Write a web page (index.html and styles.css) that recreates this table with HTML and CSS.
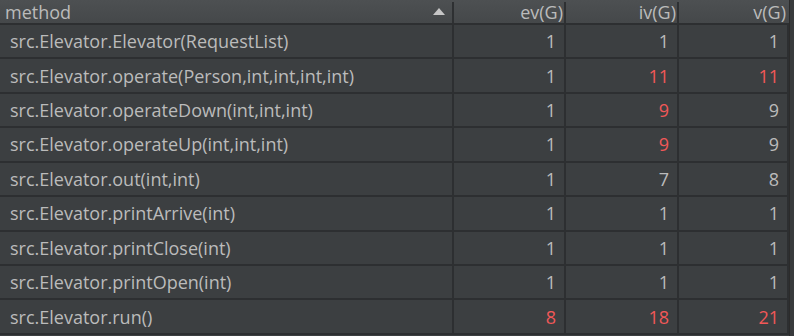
FILE: index.html
```html
<!DOCTYPE html>
<html>
<head>
<meta charset="utf-8">
<link rel="stylesheet" href="styles.css">
</head>
<body>
<div class="wrap">
  <div class="table">
    <div class="row head">
      <div class="cell name">method<span class="sort"></span></div>
      <div class="cell num">ev(G)</div>
      <div class="cell num">iv(G)</div>
      <div class="cell num">v(G)</div>
    </div>
    <div class="row"><div class="cell name">src.Elevator.Elevator(RequestList)</div><div class="cell num">1</div><div class="cell num">1</div><div class="cell num">1</div></div>
    <div class="row"><div class="cell name">src.Elevator.operate(Person,int,int,int,int)</div><div class="cell num">1</div><div class="cell num red">11</div><div class="cell num red">11</div></div>
    <div class="row"><div class="cell name">src.Elevator.operateDown(int,int,int)</div><div class="cell num">1</div><div class="cell num red">9</div><div class="cell num">9</div></div>
    <div class="row"><div class="cell name">src.Elevator.operateUp(int,int,int)</div><div class="cell num">1</div><div class="cell num red">9</div><div class="cell num">9</div></div>
    <div class="row"><div class="cell name">src.Elevator.out(int,int)</div><div class="cell num">1</div><div class="cell num">7</div><div class="cell num">8</div></div>
    <div class="row"><div class="cell name">src.Elevator.printArrive(int)</div><div class="cell num">1</div><div class="cell num">1</div><div class="cell num">1</div></div>
    <div class="row"><div class="cell name">src.Elevator.printClose(int)</div><div class="cell num">1</div><div class="cell num">1</div><div class="cell num">1</div></div>
    <div class="row"><div class="cell name">src.Elevator.printOpen(int)</div><div class="cell num">1</div><div class="cell num">1</div><div class="cell num">1</div></div>
    <div class="row"><div class="cell name">src.Elevator.run()</div><div class="cell num red">8</div><div class="cell num red">18</div><div class="cell num red">21</div></div>
  </div>
  <div class="edge"></div>
</div>
</body>
</html>
```
FILE: styles.css
```css
html, body {
  margin: 0;
  padding: 0;
  background: #3c3f41;
  overflow: hidden;
}
.wrap {
  display: flex;
  width: 794px;
  height: 336px;
  overflow: hidden;
  font-family: "Open Sans", "Noto Sans", sans-serif;
  font-size: 18px;
  color: #bbbbbb;
}
.table {
  width: 789px;
  display: flex;
  flex-direction: column;
}
.edge {
  width: 5px;
  background: #383a3c;
  border-left: 1px solid #2b2b2b;
}
.row {
  display: grid;
  grid-template-columns: 454px 112px 113px 110px;
  height: 34.43px;
  flex: none;
  box-sizing: border-box;
  border-bottom: 2px solid #2d2f31;
}
.row.head {
  height: 25px;
  background: linear-gradient(#4d5052, #45484a);
  border-bottom: 2px solid #2d2f31;
}
.cell {
  display: flex;
  align-items: center;
  box-sizing: border-box;
  border-right: 2px solid #2d2f31;
  white-space: nowrap;
}
.cell.name {
  padding-left: 10px;
}
.cell.num {
  justify-content: flex-end;
  padding-right: 8px;
}
.cell.red {
  color: #f25858;
}
.head .cell {
  border-right: 2px solid transparent;
  position: relative;
}
.head .cell.name {
  padding-left: 5px;
}
.head .cell.num {
  padding-right: 1px;
}
.head .cell:not(:last-child)::after {
  content: "";
  position: absolute;
  right: -2px;
  top: 2px;
  bottom: 1px;
  width: 2px;
  background: #2e3032;
}
.sort {
  position: absolute;
  right: 7px;
  top: 8px;
  width: 0;
  height: 0;
  border-left: 6px solid transparent;
  border-right: 6px solid transparent;
  border-bottom: 7px solid #c6c6c6;
}
```
